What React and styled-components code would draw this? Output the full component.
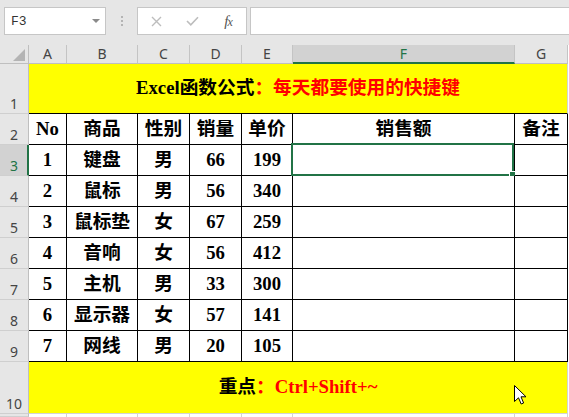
import React from 'react';
import styled, { createGlobalStyle, css } from 'styled-components';

const GlobalStyle = createGlobalStyle`
  html, body { margin: 0; padding: 0; background: #e6e6e6; overflow: hidden; }
  #root { width: 569px; height: 417px; }
`;

const Page = styled.div`
  position: relative;
  width: 569px;
  height: 417px;
  overflow: hidden;
  background: #e6e6e6;
  font-family: "Noto Sans", sans-serif;
`;

const Toolbar = styled.div`
  display: flex;
  align-items: flex-start;
  height: 45px;
  box-sizing: border-box;
  padding: 7px 0 0 4px;
`;

const NameBox = styled.div`
  box-sizing: border-box;
  width: 102px;
  height: 28px;
  background: #fff;
  border: 1px solid #c6c6c6;
  display: flex;
  align-items: center;
  justify-content: space-between;
  padding: 0 5px 0 6px;
  font-family: "Liberation Mono", monospace;
  font-size: 13px;
  color: #333;
`;

const Caret = styled.span`
  width: 0;
  height: 0;
  border-left: 4px solid transparent;
  border-right: 4px solid transparent;
  border-top: 4px solid #8a8a8a;
`;

const Grip = styled.div`
  width: 31px;
  height: 28px;
  display: flex;
  flex-direction: column;
  align-items: center;
  justify-content: center;
  gap: 2px;
`;

const GripDot = styled.span`
  width: 2px;
  height: 2px;
  background: #b4b4b4;
`;

const FxGroup = styled.div`
  box-sizing: border-box;
  width: 110px;
  height: 28px;
  background: #fff;
  border: 1px solid #c6c6c6;
  display: grid;
  grid-template-columns: repeat(3, 36px);
  align-items: center;
  justify-items: center;
`;

const FxLabel = styled.span`
  font-family: "Liberation Serif", serif;
  font-style: italic;
  font-size: 15px;
  color: #555;
  letter-spacing: -1px;
  line-height: 1;
`;

const FxSub = styled.span`
  font-size: 12px;
`;

const FormulaInput = styled.div`
  flex: 1;
  margin-left: 3px;
  height: 28px;
  box-sizing: border-box;
  background: #fff;
  border: 1px solid #c6c6c6;
  border-right: none;
`;

const Sheet = styled.div`
  display: grid;
  grid-template-columns: 29px 38px 71px 52px 52px 51px 222px 53px;
  grid-template-rows: 19px 50px repeat(8, 31px) 52px 1fr;
  height: 372px;
  background: #fff;
`;

const headBase = css`
  box-sizing: border-box;
  background: #e6e6e6;
  color: #444;
  font-family: "Noto Sans", sans-serif;
  font-size: 14px;
  line-height: 14px;
  display: flex;
  justify-content: center;
`;

const Corner = styled.div`
  ${headBase};
  border-right: 1px solid #bfbfbf;
  border-bottom: 1px solid #bfbfbf;
  align-items: flex-end;
  justify-content: flex-end;
  padding: 0 3px 2px 0;
`;

const ColHead = styled.div`
  ${headBase};
  align-items: center;
  border-right: 1px solid #c4c4c4;
  border-bottom: 1px solid #bfbfbf;
  ${(p) =>
    p.$selected &&
    css`
      background: #d2d2d2;
      color: #217346;
      border-bottom: 2px solid #217346;
      padding-top: 1px;
    `}
`;

const RowHead = styled.div`
  ${headBase};
  align-items: flex-end;
  padding-bottom: 2px;
  border-right: 1px solid #bfbfbf;
  border-bottom: 1px solid #cfcfcf;
  ${(p) =>
    p.$selected &&
    css`
      background: #d2d2d2;
      color: #217346;
      border-right: 2px solid #217346;
      padding-left: 1px;
    `}
`;

const cellText = css`
  box-sizing: border-box;
  display: flex;
  align-items: center;
  justify-content: center;
  font-family: "Liberation Serif", "Noto Sans CJK SC", serif;
  font-weight: 700;
  font-size: 18.7px;
  line-height: 1;
  color: #000;
  white-space: nowrap;
`;

const Banner = styled.div`
  ${cellText};
  grid-column: 2 / span 7;
  background: #ffff00;
  border-right: 1px solid #d4d4d4;
  border-bottom: 1px solid ${(p) => (p.$closed ? '#000' : '#d4d4d4')};
`;

const Red = styled.span`
  color: #ff0000;
`;

const Cell = styled.div`
  ${cellText};
  position: relative;
  background: #fff;
  border-right: 1px solid #000;
  border-bottom: 1px solid #000;
`;

const Blank = styled.div`
  background: #fff;
  border-right: 1px solid #d4d4d4;
`;

const Selection = styled.div`
  position: absolute;
  top: -2px;
  left: -2px;
  right: 0;
  bottom: -1px;
  border: 2px solid #217346;
  pointer-events: none;
`;

const FillHandle = styled.div`
  position: absolute;
  right: -4px;
  bottom: -4px;
  width: 5px;
  height: 5px;
  background: #217346;
  border: 1px solid #fff;
`;

const Cursor = styled.svg`
  position: absolute;
  left: 514px;
  top: 385px;
`;

const columns = ['A', 'B', 'C', 'D', 'E', 'F', 'G'];
const header = ['No', '商品', '性别', '销量', '单价', '销售额', '备注'];
const rows = [
  ['1', '键盘', '男', '66', '199'],
  ['2', '鼠标', '男', '56', '340'],
  ['3', '鼠标垫', '女', '67', '259'],
  ['4', '音响', '女', '56', '412'],
  ['5', '主机', '男', '33', '300'],
  ['6', '显示器', '女', '57', '141'],
  ['7', '网线', '男', '20', '105'],
];

export default function App() {
  return (
    <Page>
      <GlobalStyle />
      <Toolbar>
        <NameBox>
          <span>F3</span>
          <Caret />
        </NameBox>
        <Grip>
          <GripDot />
          <GripDot />
          <GripDot />
        </Grip>
        <FxGroup>
          <svg width="11" height="11" viewBox="0 0 11 11">
            <path d="M1 1 L10 10 M10 1 L1 10" stroke="#bdbdbd" strokeWidth="1.4" fill="none" />
          </svg>
          <svg width="13" height="10" viewBox="0 0 13 10">
            <path d="M1 5 L4.8 8.8 L12 1.2" stroke="#bdbdbd" strokeWidth="1.6" fill="none" />
          </svg>
          <FxLabel>
            f<FxSub>x</FxSub>
          </FxLabel>
        </FxGroup>
        <FormulaInput />
      </Toolbar>

      <Sheet>
        <Corner>
          <svg width="12" height="12" viewBox="0 0 12 12">
            <polygon points="12,0 12,12 0,12" fill="#b4b4b4" />
          </svg>
        </Corner>
        {columns.map((c) => (
          <ColHead key={c} $selected={c === 'F'}>
            {c}
          </ColHead>
        ))}

        <RowHead>1</RowHead>
        <Banner $closed>
          Excel函数公式<Red>：每天都要使用的快捷键</Red>
        </Banner>

        <RowHead>2</RowHead>
        {header.map((h) => (
          <Cell key={h}>{h}</Cell>
        ))}

        {rows.map((r, i) => (
          <React.Fragment key={r[0]}>
            <RowHead $selected={i === 0}>{i + 3}</RowHead>
            {r.map((v, j) => (
              <Cell key={j}>{v}</Cell>
            ))}
            <Cell>
              {i === 0 && (
                <Selection>
                  <FillHandle />
                </Selection>
              )}
            </Cell>
            <Cell />
          </React.Fragment>
        ))}

        <RowHead>10</RowHead>
        <Banner>
          重点<Red>：Ctrl+Shift+~</Red>
        </Banner>

        <RowHead />
        {columns.map((c) => (
          <Blank key={c} />
        ))}
      </Sheet>

      <Cursor width="13" height="20" viewBox="0 0 13 20">
        <path
          d="M0.5 0.5 V16.5 L4.5 12.8 L7.2 19 L9.6 18 L7 11.8 H12 Z"
          fill="#fff"
          stroke="#000"
          strokeWidth="1"
          strokeLinejoin="miter"
        />
      </Cursor>
    </Page>
  );
}
